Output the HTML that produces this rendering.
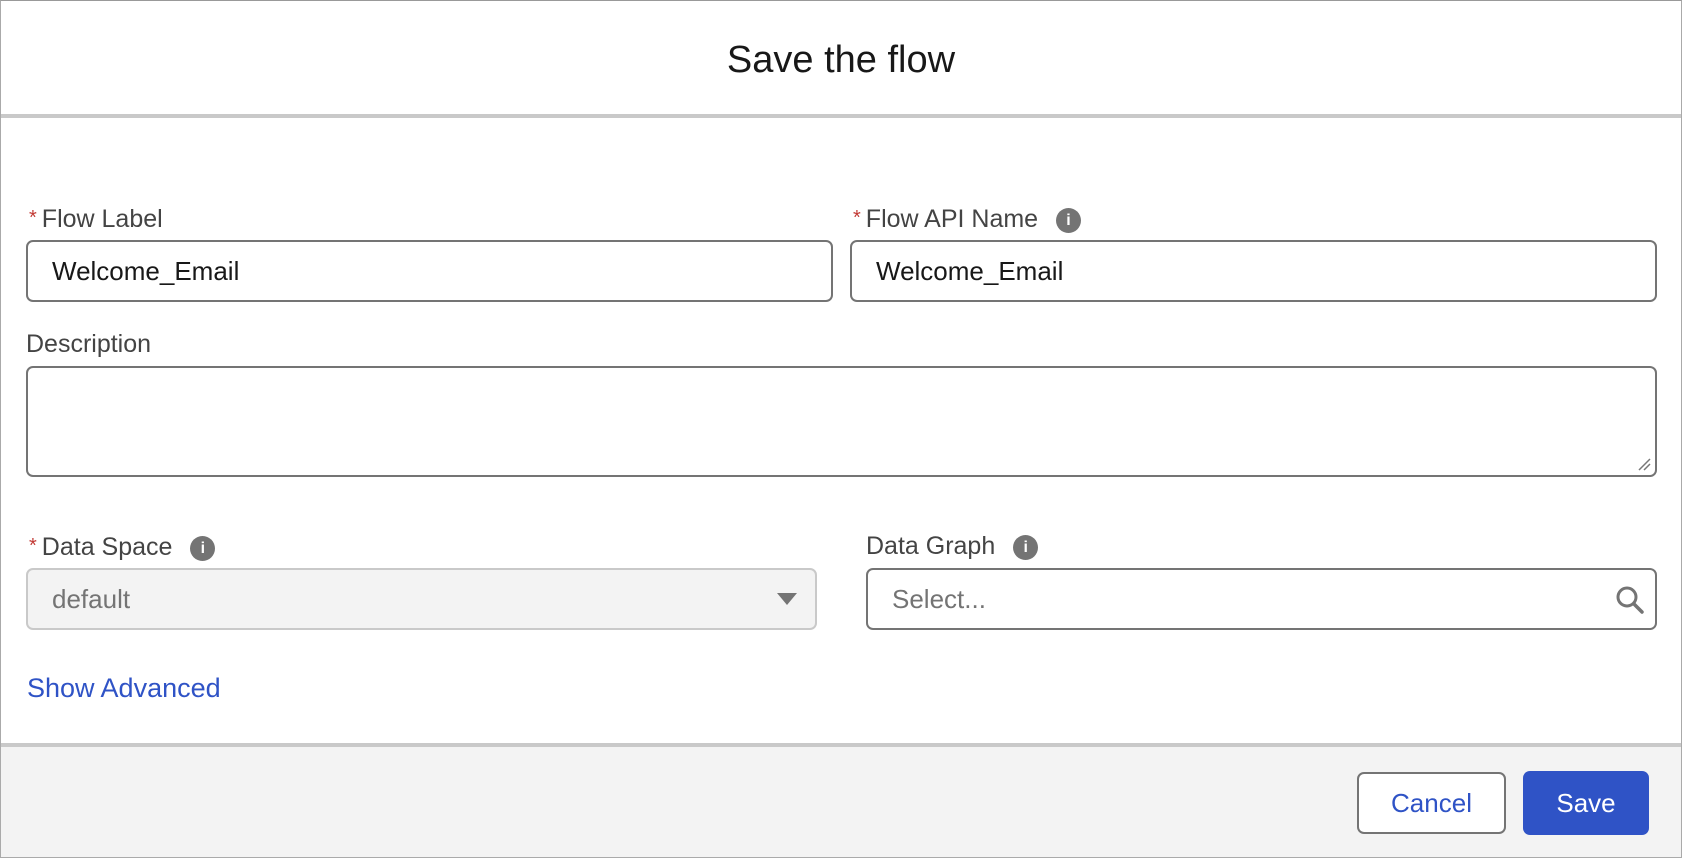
<!DOCTYPE html>
<html><head><style>
*{box-sizing:border-box;margin:0;padding:0}
body{width:1682px;height:858px;background:#fff;font-family:"Liberation Sans",Arial,sans-serif;position:relative;overflow:hidden}
.a{position:absolute}
.frame{left:0;top:0;width:1682px;height:858px;border:1px solid #aaa;border-top:1px solid #999}
.lbl{font-size:25px;color:#444;line-height:28px}
.req{color:#c23934;font-size:20px;margin-right:5px;vertical-align:3px}
.inp{border:2px solid #747474;border-radius:7px;background:#fff;font-size:26px;color:#181818;padding-left:24px;display:flex;align-items:center}
.info{display:inline-block;width:25px;height:25px;border-radius:50%;background:#747474;color:#fff;font-size:16px;font-weight:bold;text-align:center;line-height:25px;vertical-align:2px;font-family:"Liberation Sans",sans-serif;margin-left:11px}
</style></head><body>
<div class="a frame"></div>
<div class="a" style="left:0;top:0;width:1682px;height:116px;text-align:center;line-height:120px;font-size:38px;color:#181818">Save the flow</div>
<div class="a" style="left:1px;top:114px;width:1680px;height:4px;background:#c9c9c9"></div>

<div class="a lbl" style="left:29px;top:204px"><span class="req">*</span>Flow Label</div>
<div class="a inp" style="left:26px;top:240px;width:807px;height:62px">Welcome_Email</div>
<div class="a lbl" style="left:853px;top:204px"><span class="req">*</span>Flow API Name <span class="info">i</span></div>
<div class="a inp" style="left:850px;top:240px;width:807px;height:62px">Welcome_Email</div>

<div class="a lbl" style="left:26px;top:330px">Description</div>
<div class="a inp" style="left:26px;top:366px;width:1631px;height:111px"></div>
<svg class="a" style="left:1636px;top:456px" width="16" height="16"><path d="M3 14L14 3M8 14L14 8" stroke="#777" stroke-width="1.5"/></svg>

<div class="a lbl" style="left:29px;top:532px"><span class="req">*</span>Data Space <span class="info">i</span></div>
<div class="a inp" style="left:26px;top:568px;width:791px;height:62px;background:#f3f3f3;border-color:#c9c9c9;color:#747474">default</div>
<svg class="a" style="left:777px;top:591px" width="20" height="16"><path d="M0 2H20L10 14Z" fill="#747474"/></svg>

<div class="a lbl" style="left:866px;top:532px">Data Graph <span class="info">i</span></div>
<div class="a inp" style="left:866px;top:568px;width:791px;height:62px;color:#747474">Select...</div>
<svg class="a" style="left:1614px;top:584px" width="32" height="32"><circle cx="13" cy="13" r="9" fill="none" stroke="#747474" stroke-width="3"/><path d="M20 20L28 28" stroke="#747474" stroke-width="3.5" stroke-linecap="round"/></svg>

<div class="a" style="left:27px;top:673px;font-size:27px;color:#2f53c6">Show Advanced</div>

<div class="a" style="left:1px;top:743px;width:1680px;height:4px;background:#c9c9c9"></div>
<div class="a" style="left:1px;top:747px;width:1680px;height:110px;background:#f3f3f3"></div>
<div class="a" style="left:1357px;top:772px;width:149px;height:62px;border:2px solid #747474;border-radius:7px;background:#fff;color:#2f53c6;font-size:26px;text-align:center;line-height:58px">Cancel</div>
<div class="a" style="left:1523px;top:771px;width:126px;height:64px;border-radius:7px;background:#2f53c6;color:#fff;font-size:26px;text-align:center;line-height:64px">Save</div>
</body></html>
